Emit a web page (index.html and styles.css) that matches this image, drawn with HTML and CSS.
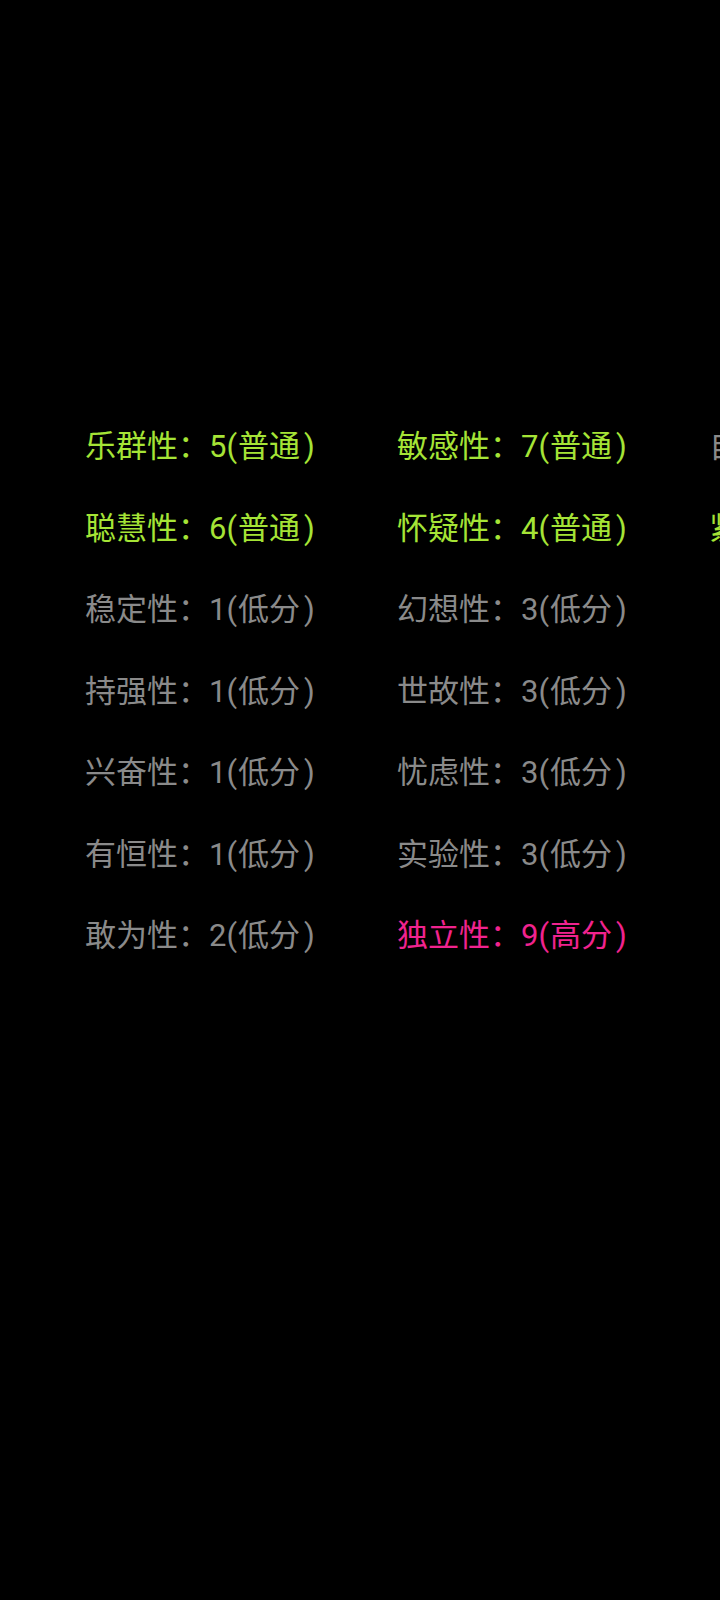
FILE: index.html
```html
<!DOCTYPE html>
<html lang="zh-CN">
<head>
<meta charset="utf-8">
<title>16PF</title>
<link rel="stylesheet" href="styles.css">
</head>
<body>
<div class="screen">
  <div class="grid">
    <div class="item normal">乐群性：5<span class="po">(</span>普通<span class="pc">)</span></div>
    <div class="item normal">聪慧性：6<span class="po">(</span>普通<span class="pc">)</span></div>
    <div class="item low">稳定性：1<span class="po">(</span>低分<span class="pc">)</span></div>
    <div class="item low">持强性：1<span class="po">(</span>低分<span class="pc">)</span></div>
    <div class="item low">兴奋性：1<span class="po">(</span>低分<span class="pc">)</span></div>
    <div class="item low">有恒性：1<span class="po">(</span>低分<span class="pc">)</span></div>
    <div class="item low">敢为性：2<span class="po">(</span>低分<span class="pc">)</span></div>
    <div class="item normal">敏感性：7<span class="po">(</span>普通<span class="pc">)</span></div>
    <div class="item normal">怀疑性：4<span class="po">(</span>普通<span class="pc">)</span></div>
    <div class="item low">幻想性：3<span class="po">(</span>低分<span class="pc">)</span></div>
    <div class="item low">世故性：3<span class="po">(</span>低分<span class="pc">)</span></div>
    <div class="item low">忧虑性：3<span class="po">(</span>低分<span class="pc">)</span></div>
    <div class="item low">实验性：3<span class="po">(</span>低分<span class="pc">)</span></div>
    <div class="item high">独立性：9<span class="po">(</span>高分<span class="pc">)</span></div>
    <div class="item low">自律性：3<span class="po">(</span>低分<span class="pc">)</span></div>
    <div class="item normal">紧张性：6<span class="po">(</span>普通<span class="pc">)</span></div>
  </div>
</div>
</body>
</html>
```
FILE: styles.css
```css
html, body {
  margin: 0;
  padding: 0;
  background: #000;
}
.screen {
  width: 720px;
  height: 1600px;
  overflow: hidden;
  background: #000;
}
.grid {
  display: grid;
  grid-auto-flow: column;
  grid-template-rows: repeat(7, 81.5px);
  grid-auto-columns: 312px;
  padding: 406px 0 0 85px;
  font-family: Roboto, "Noto Sans CJK SC", sans-serif;
  font-size: 31px;
  line-height: 81.5px;
  white-space: nowrap;
}
.po {
  margin-right: 1px;
}
.pc {
  margin-left: 4px;
}
.item {
  color: #8a8a8a;
}
.item.normal {
  color: #a5e436;
}
.item.high {
  color: #f0238e;
}
```
